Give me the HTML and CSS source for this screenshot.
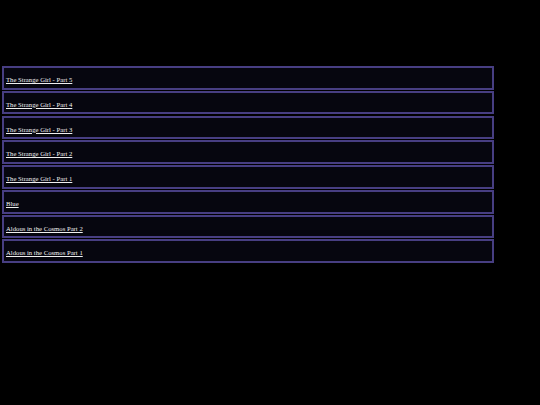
FILE: index.html
```html
<!DOCTYPE html>
<html>
<head>
<meta charset="utf-8">
<link rel="stylesheet" href="styles.css">
</head>
<body>
<div class="list">
  <div class="item"><a href="#">The Strange Girl - Part 5</a></div>
  <div class="item"><a href="#">The Strange Girl - Part 4</a></div>
  <div class="item"><a href="#">The Strange Girl - Part 3</a></div>
  <div class="item"><a href="#">The Strange Girl - Part 2</a></div>
  <div class="item"><a href="#">The Strange Girl - Part 1</a></div>
  <div class="item"><a href="#">Blue</a></div>
  <div class="item"><a href="#">Aldous in the Cosmos Part 2</a></div>
  <div class="item"><a href="#">Aldous in the Cosmos Part 1</a></div>
</div>
</body>
</html>
```
FILE: styles.css
```css
html, body {
  margin: 0;
  padding: 0;
  background: #000;
}
body {
  font-family: "Liberation Serif", "Times New Roman", serif;
  font-size: 6.7px;
}
.list {
  display: flex;
  flex-direction: column;
  gap: 1.2px;
  padding: 66px 0 0 2px;
  width: 492px;
}
.item {
  border: 2px solid #473e82;
  background: #06060f;
  padding: 8px 2px 0;
  box-sizing: border-box;
  height: 23.6px;
}
.item a {
  color: #f0f0f0;
  text-decoration: underline;
}
```
